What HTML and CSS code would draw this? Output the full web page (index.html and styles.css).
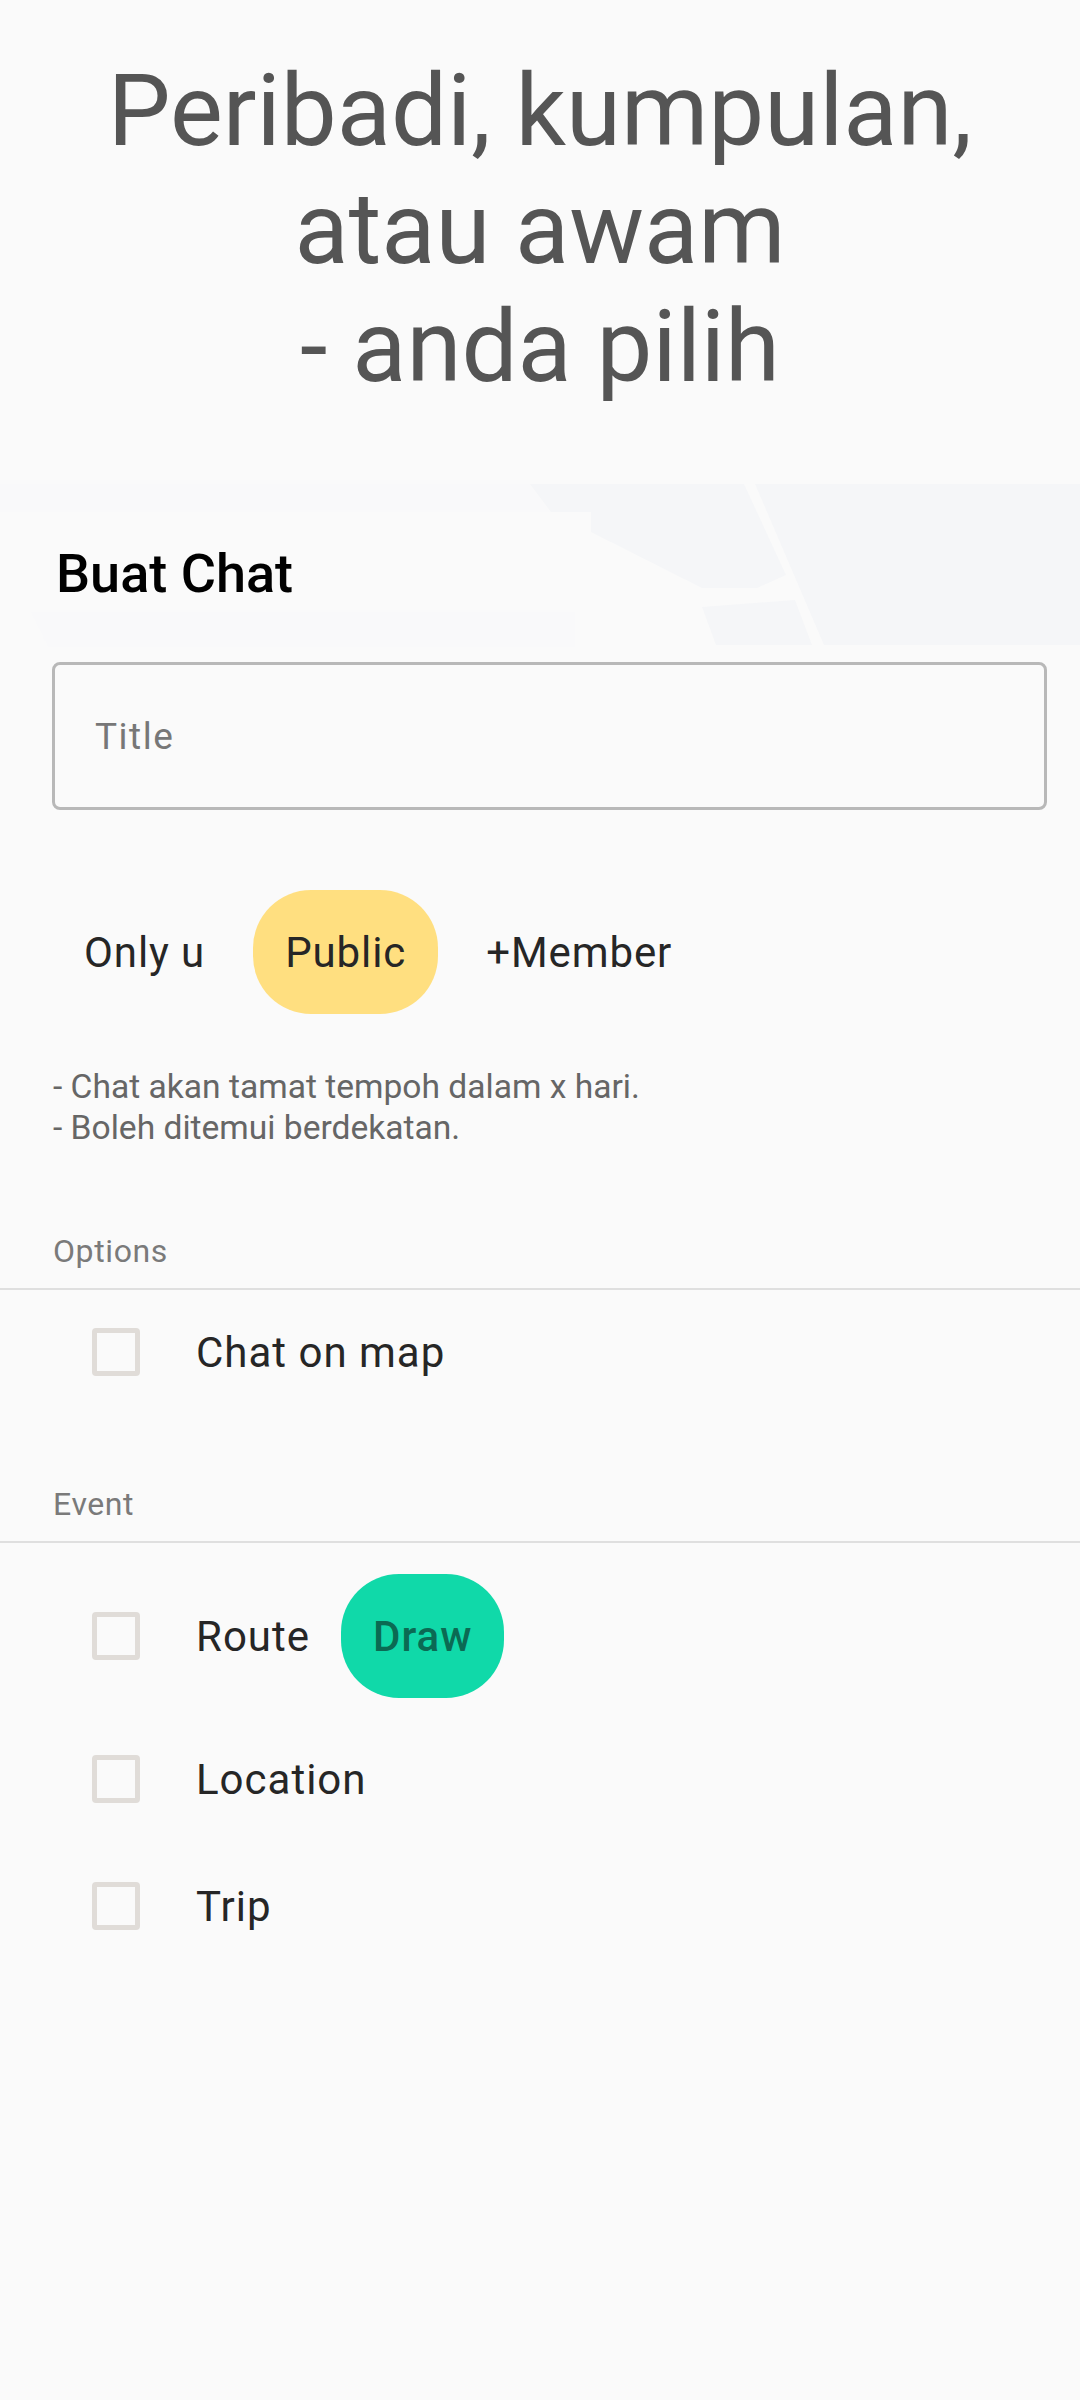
FILE: index.html
```html
<!DOCTYPE html>
<html lang="ms">
<head>
  <meta charset="UTF-8">
  <meta name="viewport" content="width=device-width, initial-scale=1.0">
  <title>Buat Chat</title>
  <link rel="stylesheet" href="styles.css">
</head>
<body>
  <header class="hero">
    <h1>Peribadi, kumpulan,<br>atau awam<br>- anda pilih</h1>
  </header>

  <main class="sheet">
    <!-- peta pudar di belakang tajuk -->
    <svg class="map-bg" viewBox="0 0 1080 164" aria-hidden="true">
      <path class="land-faint" d="M0 0H551V28H0Z"/>
      <path class="land-faint" d="M31 128H575V163H48Z"/>
      <path class="land" d="M530 0H744L786 91L757 104H702L591 48V28H551Z"/>
      <path class="land" d="M702 123L795 116L812 161H716Z"/>
      <path class="land" d="M755 0H1080V161H824Z"/>
    </svg>

    <h2 class="sheet-title">Buat Chat</h2>

    <div class="title-field">
      <input type="text" placeholder="Title">
    </div>

    <div class="chips">
      <button type="button" class="chip">Only u</button>
      <button type="button" class="chip chip-active">Public</button>
      <button type="button" class="chip">+Member</button>
    </div>

    <p class="hint">- Chat akan tamat tempoh dalam x hari.<br>- Boleh ditemui berdekatan.</p>

    <section class="group group-options">
      <div class="group-label">Options</div>
      <label class="check-row">
        <span class="box"></span>
        <span class="check-text">Chat on map</span>
      </label>
    </section>

    <section class="group group-event">
      <div class="group-label">Event</div>
      <div class="check-row row-route">
        <span class="box"></span>
        <span class="check-text">Route</span>
        <button type="button" class="chip chip-draw">Draw</button>
      </div>
      <label class="check-row row-location">
        <span class="box"></span>
        <span class="check-text">Location</span>
      </label>
      <label class="check-row row-trip">
        <span class="box"></span>
        <span class="check-text">Trip</span>
      </label>
    </section>
  </main>
</body>
</html>
```

FILE: styles.css
```css
/* Global */
html, body {
  margin: 0;
  padding: 0;
}
body {
  width: 1080px;
  height: 2400px;
  overflow: hidden;
  background: #fafafa;
  font-family: Roboto, sans-serif;
  color: #262626;
}

/* Tajuk besar */
.hero {
  height: 484px;
  box-sizing: border-box;
  padding-top: 52px;
  text-align: center;
}
.hero h1 {
  margin: 0;
  font-size: 99.6px;
  font-weight: 400;
  line-height: 118px;
  color: #555;
}

.sheet {
  position: relative;
  padding: 0 0 0 52px;
}
.map-bg {
  position: absolute;
  top: 0;
  left: 0;
  width: 1080px;
  height: 164px;
}
.land {
  fill: #f5f6f8;
}
.land-faint {
  fill: #f9f9fa;
}

.sheet-title {
  position: relative;
  margin: 0;
  padding: 59px 0 0 4px;
  font-size: 54px;
  font-weight: 500;
  line-height: 61px;
  color: #000;
}

/* Kotak input */
.title-field {
  position: relative;
  width: 995px;
  height: 148px;
  margin-top: 58px;
  box-sizing: border-box;
  border: 3px solid #b8b8b8;
  border-radius: 8px;
}
.title-field input {
  width: 100%;
  height: 100%;
  box-sizing: border-box;
  padding: 0 40px;
  border: none;
  outline: none;
  background: transparent;
  font-family: Roboto, sans-serif;
  font-size: 37px;
  letter-spacing: 1.5px;
}
.title-field input::placeholder {
  color: #777;
  opacity: 1;
}

/* Pilihan jenis chat */
.chips {
  display: flex;
  gap: 16px;
  margin-top: 80px;
}
.chip {
  height: 124px;
  padding: 0 32px;
  border: none;
  border-radius: 58px;
  background: transparent;
  font-family: Roboto, sans-serif;
  font-size: 42px;
  letter-spacing: 0.9px;
  color: #262626;
}
.chip-active {
  background: #ffdf80;
}
.chip-draw {
  margin-left: 31px;
  background: #10d9a9;
  color: #0b6a53;
  font-weight: 500;
  letter-spacing: 1px;
}

.hint {
  margin: 52px 0 0;
  padding-left: 1px;
  font-size: 33.6px;
  line-height: 41px;
  color: #666;
}

/* Kumpulan pilihan */
.group {
  margin-left: -52px;
}
.group-options {
  margin-top: 84px;
}
.group-event {
  margin-top: 71px;
}
.group-label {
  padding: 0 0 18px 53px;
  border-bottom: 2px solid #dfdfdf;
  font-size: 32px;
  line-height: 38px;
  letter-spacing: 0.6px;
  color: #7a7a7a;
}
.check-row {
  display: flex;
  align-items: center;
  height: 124px;
  padding-left: 92px;
  font-size: 42px;
  letter-spacing: 1px;
}
.row-route {
  margin-top: 31px;
}
.row-location {
  margin-top: 19px;
}
.row-trip {
  margin-top: 10px;
  height: 110px;
}
.box {
  width: 48px;
  height: 48px;
  flex: none;
  box-sizing: border-box;
  margin-right: 56px;
  border: 5px solid #e0dcd8;
  border-radius: 4px;
}
```
